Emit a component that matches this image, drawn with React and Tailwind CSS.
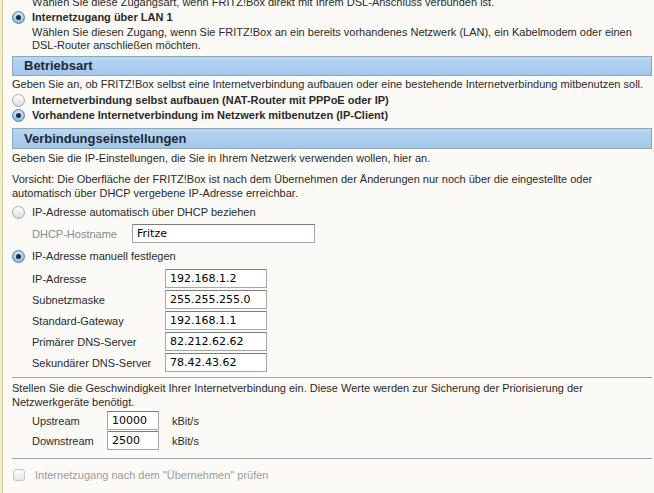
import React from 'react';

const Radio = ({ checked }) =>
  checked ? (
    <span className="w-[13px] h-[13px] rounded-full border border-[#5b7fa6] bg-[radial-gradient(circle_at_50%_35%,#e4f1fc,#8fbde6_70%,#6a9fd0)] flex items-center justify-center shrink-0">
      <span className="w-[5px] h-[5px] rounded-full bg-[#1d2a44]" />
    </span>
  ) : (
    <span className="w-[13px] h-[13px] rounded-full border border-[#a9a9a9] bg-[linear-gradient(#ffffff,#dcdcdc)] shrink-0" />
  );

const Field = ({ value, w }) => (
  <div
    className={`${w} h-[19px] bg-white border border-[#a5a5a5] border-t-[#7d7d7d] flex items-center pl-[4px] text-[11px] text-black`}
    style={{ fontFamily: '"DejaVu Sans", sans-serif' }}
  >
    {value}
  </div>
);

const Header = ({ children, h }) => (
  <div className={`${h} border border-[#8ea9b3] bg-[linear-gradient(#b7d7f4,#a3c6eb)] flex items-center pl-[11px] text-[13px] font-bold text-[#1f2a36]`}>
    {children}
  </div>
);

const ipRows = [
  ['IP-Adresse', '192.168.1.2'],
  ['Subnetzmaske', '255.255.255.0'],
  ['Standard-Gateway', '192.168.1.1'],
  ['Primärer DNS-Server', '82.212.62.62'],
  ['Sekundärer DNS-Server', '78.42.43.62'],
];

export default function App() {
  return (
    <div
      className="w-[654px] h-[493px] overflow-hidden flex bg-[#fbfaf6] text-[11px] leading-[14px] text-[#2a2a2a] whitespace-nowrap"
      style={{ fontFamily: '"Liberation Sans", Arial, sans-serif' }}
    >
      <div className="w-[3px] shrink-0 bg-[#f3efc4] border-r border-[#cfc89c]" />
      <div className="flex-1 pl-[9px] pr-[2px] -mt-[5px]">
        <div className="pl-[20px]">Wählen Sie diese Zugangsart, wenn FRITZ!Box direkt mit Ihrem DSL-Anschluss verbunden ist.</div>
        <div className="mt-[1px] flex items-center gap-[7px]">
          <Radio checked />
          <span className="font-bold">Internetzugang über LAN 1</span>
        </div>
        <div className="pl-[20px] mt-[2px] leading-[13px]">
          Wählen Sie diesen Zugang, wenn Sie FRITZ!Box an ein bereits vorhandenes Netzwerk (LAN), ein Kabelmodem oder einen
          <br />
          DSL-Router anschließen möchten.
        </div>

        <div className="mt-[4px]">
          <Header h="h-[20px]">Betriebsart</Header>
        </div>
        <div className="mt-[1px]">Geben Sie an, ob FRITZ!Box selbst eine Internetverbindung aufbauen oder eine bestehende Internetverbindung mitbenutzen soll.</div>
        <div className="mt-[2px] flex items-center gap-[7px]">
          <Radio />
          <span className="font-bold">Internetverbindung selbst aufbauen (NAT-Router mit PPPoE oder IP)</span>
        </div>
        <div className="mt-[1px] flex items-center gap-[7px]">
          <Radio checked />
          <span className="font-bold">Vorhandene Internetverbindung im Netzwerk mitbenutzen (IP-Client)</span>
        </div>

        <div className="mt-[6px]">
          <Header h="h-[21px]">Verbindungseinstellungen</Header>
        </div>
        <div className="mt-[2px]">Geben Sie die IP-Einstellungen, die Sie in Ihrem Netzwerk verwenden wollen, hier an.</div>
        <div className="mt-[7px]">
          Vorsicht: Die Oberfläche der FRITZ!Box ist nach dem Übernehmen der Änderungen nur noch über die eingestellte oder
          <br />
          automatisch über DHCP vergebene IP-Adresse erreichbar.
        </div>

        <div className="mt-[5px] flex items-center gap-[7px]">
          <Radio />
          <span>IP-Adresse automatisch über DHCP beziehen</span>
        </div>
        <div className="mt-[5px] pl-[20px] flex items-center">
          <span className="w-[100px] text-[#8a8a8a]">DHCP-Hostname</span>
          <Field value="Fritze" w="w-[183px]" />
        </div>

        <div className="mt-[6px] flex items-center gap-[7px]">
          <Radio checked />
          <span>IP-Adresse manuell festlegen</span>
        </div>
        <div className="mt-[6px] pl-[20px] flex flex-col gap-[2px]">
          {ipRows.map(([label, value]) => (
            <div key={label} className="flex items-center">
              <span className="w-[133px]">{label}</span>
              <Field value={value} w="w-[102px]" />
            </div>
          ))}
        </div>

        <div className="mt-[5px] border-t border-[#8fa9a9]" />
        <div className="mt-[3px]">
          Stellen Sie die Geschwindigkeit Ihrer Internetverbindung ein. Diese Werte werden zur Sicherung der Priorisierung der
          <br />
          Netzwerkgeräte benötigt.
        </div>
        <div className="mt-[2px] pl-[20px] flex flex-col gap-[1px]">
          <div className="flex items-center">
            <span className="w-[75px]">Upstream</span>
            <Field value="10000" w="w-[52px]" />
            <span className="ml-[13px]">kBit/s</span>
          </div>
          <div className="flex items-center">
            <span className="w-[75px]">Downstream</span>
            <Field value="2500" w="w-[52px]" />
            <span className="ml-[13px]">kBit/s</span>
          </div>
        </div>
        <div className="mt-[8px] border-t border-[#8fa9a9]" />

        <div className="mt-[9px] flex items-center gap-[10px] pl-[1px]">
          <span className="w-[12px] h-[12px] rounded-[3px] border border-[#c6c6c6] bg-[linear-gradient(#fbfbfb,#e6e6e6)]" />
          <span className="text-[#9a9a9a]">Internetzugang nach dem "Übernehmen" prüfen</span>
        </div>
      </div>
    </div>
  );
}
